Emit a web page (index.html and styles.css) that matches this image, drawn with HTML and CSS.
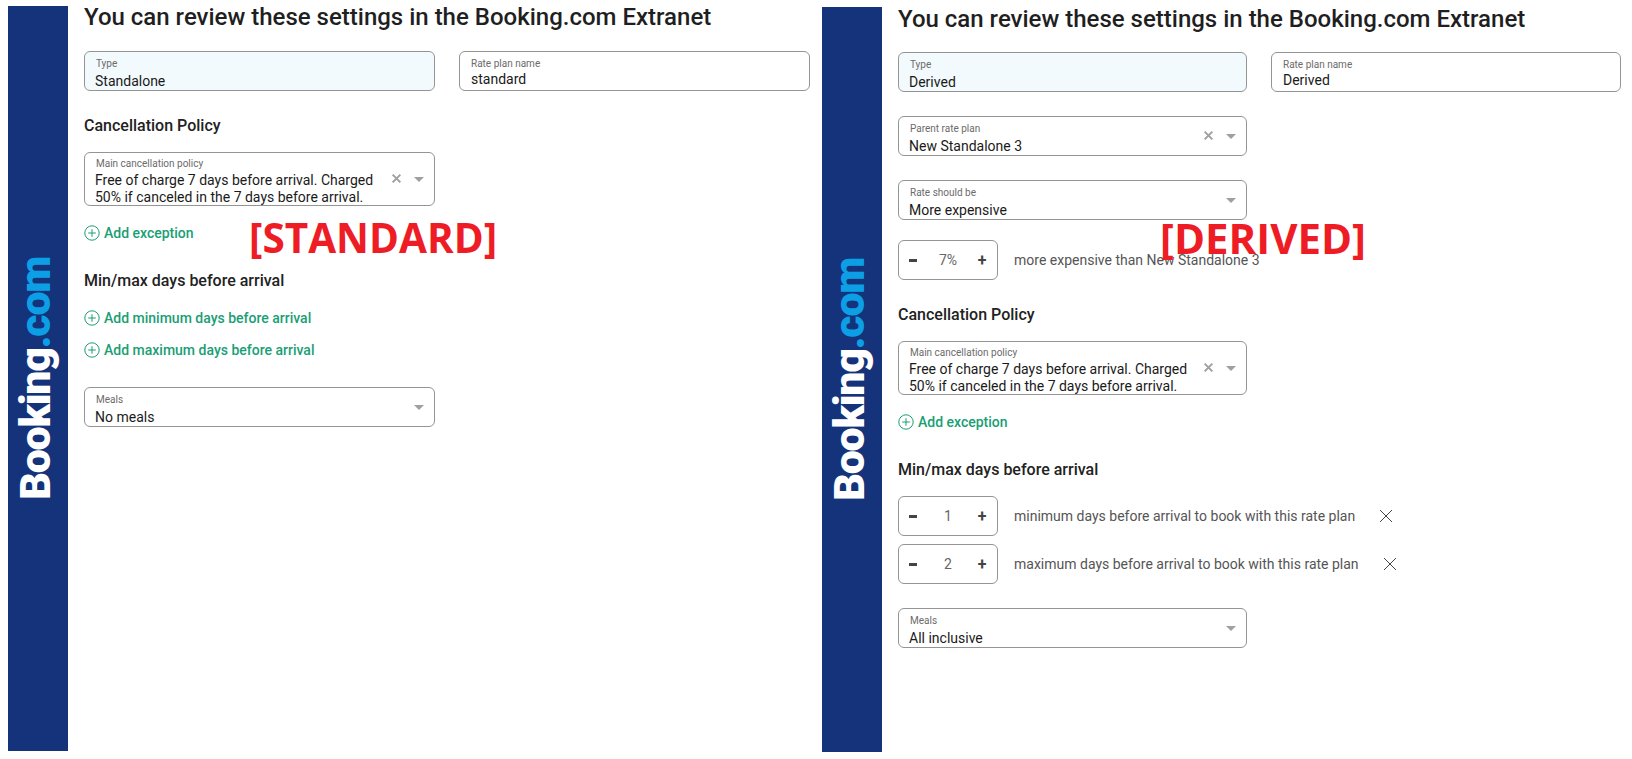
FILE: index.html
```html
<!DOCTYPE html>
<html lang="en">
<head>
    <meta charset="UTF-8">
    <meta name="viewport" content="width=device-width, initial-scale=1.0">
    <title>Rate plans - Standard and Derived</title>
    <link rel="stylesheet" href="styles.css">
</head>
<body>
    <div id="comparison">
        <!-- Standard rate plan -->
        <div class="panel panel-standard">
            <div class="brand-bar"><span class="brand">Booking<span class="brand-dot">.com</span></span></div>
            <div class="settings">
                <h1>You can review these settings in the Booking.com Extranet</h1>
                <div class="field-row">
                    <div class="field field-locked">
                        <label>Type</label>
                        <div class="value">Standalone</div>
                    </div>
                    <div class="field field-text">
                        <label>Rate plan name</label>
                        <div class="value">standard</div>
                    </div>
                </div>
                <h2 class="after-row">Cancellation Policy</h2>
                <div class="field field-half field-policy">
                    <label>Main cancellation policy</label>
                    <div class="value">Free of charge 7 days before arrival. Charged 50% if canceled in the 7 days before arrival.</div>
                    <svg class="clear" viewBox="0 0 10 10"><path d="M1.5 1.5l7 7M8.5 1.5l-7 7"/></svg>
                    <span class="caret"></span>
                </div>
                <div class="add-link add-exception">
                    <svg viewBox="0 0 16 16"><circle cx="8" cy="8" r="7.2"/><path d="M8 4.2v7.6M4.2 8h7.6"/></svg>
                    Add exception
                </div>
                <h2 class="after-add">Min/max days before arrival</h2>
                <div class="add-link add-first">
                    <svg viewBox="0 0 16 16"><circle cx="8" cy="8" r="7.2"/><path d="M8 4.2v7.6M4.2 8h7.6"/></svg>
                    Add minimum days before arrival
                </div>
                <div class="add-link add-second">
                    <svg viewBox="0 0 16 16"><circle cx="8" cy="8" r="7.2"/><path d="M8 4.2v7.6M4.2 8h7.6"/></svg>
                    Add maximum days before arrival
                </div>
                <div class="field field-half meals-standard">
                    <label>Meals</label>
                    <div class="value">No meals</div>
                    <span class="caret"></span>
                </div>
            </div>
            <div class="stamp stamp-standard">[STANDARD]</div>
        </div>

        <!-- Derived rate plan -->
        <div class="panel panel-derived">
            <div class="brand-bar"><span class="brand">Booking<span class="brand-dot">.com</span></span></div>
            <div class="settings">
                <h1>You can review these settings in the Booking.com Extranet</h1>
                <div class="field-row">
                    <div class="field field-locked">
                        <label>Type</label>
                        <div class="value">Derived</div>
                    </div>
                    <div class="field field-text">
                        <label>Rate plan name</label>
                        <div class="value">Derived</div>
                    </div>
                </div>
                <div class="field field-half parent-plan">
                    <label>Parent rate plan</label>
                    <div class="value">New Standalone 3</div>
                    <svg class="clear" viewBox="0 0 10 10"><path d="M1.5 1.5l7 7M8.5 1.5l-7 7"/></svg>
                    <span class="caret"></span>
                </div>
                <div class="field field-half rate-direction">
                    <label>Rate should be</label>
                    <div class="value">More expensive</div>
                    <span class="caret"></span>
                </div>
                <div class="stepper-row percent-row">
                    <div class="stepper">
                        <span class="minus"></span>
                        <span class="count count-muted">7%</span>
                        <span class="plus">+</span>
                    </div>
                    <span class="stepper-text">more expensive than New Standalone 3</span>
                </div>
                <h2 class="after-percent">Cancellation Policy</h2>
                <div class="field field-half field-policy">
                    <label>Main cancellation policy</label>
                    <div class="value">Free of charge 7 days before arrival. Charged 50% if canceled in the 7 days before arrival.</div>
                    <svg class="clear" viewBox="0 0 10 10"><path d="M1.5 1.5l7 7M8.5 1.5l-7 7"/></svg>
                    <span class="caret"></span>
                </div>
                <div class="add-link add-exception">
                    <svg viewBox="0 0 16 16"><circle cx="8" cy="8" r="7.2"/><path d="M8 4.2v7.6M4.2 8h7.6"/></svg>
                    Add exception
                </div>
                <h2 class="after-add">Min/max days before arrival</h2>
                <div class="stepper-row min-row">
                    <div class="stepper">
                        <span class="minus"></span>
                        <span class="count">1</span>
                        <span class="plus">+</span>
                    </div>
                    <span class="stepper-text">minimum days before arrival to book with this rate plan</span>
                    <svg class="remove" viewBox="0 0 14 14"><path d="M1 1l12 12M13 1L1 13"/></svg>
                </div>
                <div class="stepper-row max-row">
                    <div class="stepper">
                        <span class="minus"></span>
                        <span class="count">2</span>
                        <span class="plus">+</span>
                    </div>
                    <span class="stepper-text">maximum days before arrival to book with this rate plan</span>
                    <svg class="remove" viewBox="0 0 14 14"><path d="M1 1l12 12M13 1L1 13"/></svg>
                </div>
                <div class="field field-half meals-derived">
                    <label>Meals</label>
                    <div class="value">All inclusive</div>
                    <span class="caret"></span>
                </div>
            </div>
            <div class="stamp stamp-derived">[DERIVED]</div>
        </div>
    </div>
</body>
</html>
```

FILE: styles.css
```css
/* Base styles */
* {
    box-sizing: border-box;
    margin: 0;
    padding: 0;
}

html, body {
    height: 100%;
    overflow: hidden;
}

body {
    font-family: "Roboto", "Liberation Sans", sans-serif;
    background-color: #ffffff;
    color: #1a1a1a;
}

#comparison {
    display: flex;
    gap: 12px;
    padding: 6px 11px 0 8px;
}

.panel {
    position: relative;
    display: flex;
    height: 745px;
}

.panel-standard {
    width: 802px;
}

.panel-derived {
    flex: 1;
    margin-top: 1px;
}

/* Sidebar with the logo */
.brand-bar {
    flex: 0 0 60px;
    display: flex;
    align-items: center;
    justify-content: center;
    padding-right: 5px;
    background-color: #14337a;
}

.brand {
    writing-mode: vertical-rl;
    transform: rotate(180deg);
    font-family: "Roboto", sans-serif;
    font-size: 43px;
    font-weight: 900;
    line-height: 1;
    letter-spacing: -1.3px;
    color: #ffffff;
}

.brand-dot {
    color: #0d9fe6;
}

/* Settings column */
.settings {
    flex: 1;
    padding-left: 16px;
}

h1 {
    font-size: 24px;
    font-weight: 500;
    line-height: 24px;
    color: #1f1f1f;
}

.panel-standard h1 {
    margin-top: -1px;
}

h2 {
    font-size: 16px;
    font-weight: 500;
    line-height: 20px;
    color: #222;
}

.field-row {
    display: grid;
    grid-template-columns: 1fr 1fr;
    gap: 24px;
    margin-top: 21px;
}

.panel-standard .field-row {
    margin-top: 22px;
}

.panel-derived .field-row {
    grid-template-columns: 349px 1fr;
}

.field {
    position: relative;
    height: 40px;
    padding: 5px 50px 0 10px;
    border: 1px solid #949494;
    border-radius: 6px;
    background-color: #ffffff;
}

.field label {
    display: block;
    padding-left: 1px;
    font-size: 10px;
    line-height: 14px;
    color: #6b6b6b;
}

.field .value {
    margin-top: 2px;
    font-size: 14px;
    line-height: 17px;
    color: #1a1a1a;
}

.field-locked {
    background-color: #f2fafd;
}

.field-text .value {
    margin-top: 0;
    padding-left: 1px;
}

.field-half {
    width: 351px;
}

.panel-derived .field-half {
    width: 349px;
}

.field-policy {
    height: 54px;
    padding-top: 4px;
}

.field-policy label {
    line-height: 13px;
}

.clear {
    position: absolute;
    right: 32px;
    top: 50%;
    width: 11px;
    height: 11px;
    margin-top: -6px;
    fill: none;
    stroke: #a0a0a0;
    stroke-width: 1.8;
}

.caret {
    position: absolute;
    right: 10px;
    top: 50%;
    margin-top: -2px;
    border-left: 5px solid transparent;
    border-right: 5px solid transparent;
    border-top: 5px solid #a0a0a0;
}

/* Green links */
.add-link {
    display: flex;
    align-items: center;
    gap: 4px;
    height: 20px;
    font-size: 14px;
    font-weight: 500;
    color: #1a9e75;
}

.add-link svg {
    width: 16px;
    height: 16px;
    fill: none;
    stroke: #1a9e75;
    stroke-width: 1;
}

/* Stepper */
.stepper-row {
    display: flex;
    align-items: center;
}

.stepper {
    flex: 0 0 100px;
    display: flex;
    align-items: center;
    justify-content: space-between;
    height: 40px;
    padding: 0 10px;
    border: 1px solid #949494;
    border-radius: 6px;
}

.minus {
    width: 8px;
    height: 3px;
    background-color: #444;
}

.plus {
    width: 10px;
    padding-top: 1px;
    font-size: 16px;
    font-weight: 700;
    line-height: 16px;
    text-align: center;
    color: #444;
}

.count {
    padding-left: 2px;
    font-size: 14px;
    color: #666;
}

.stepper-text {
    margin-left: 16px;
    font-size: 14px;
    color: #555;
}

.remove {
    width: 14px;
    height: 14px;
    margin-left: 24px;
    fill: none;
    stroke: #444;
    stroke-width: 1;
}

/* Vertical rhythm */
.after-row { margin-top: 25px; }
.panel-standard .field-policy { margin-top: 16px; }
.panel-standard .add-exception { margin-top: 17px; }
.after-add { margin-top: 28px; }
.add-first { margin-top: 17px; }
.add-second { margin-top: 12px; }
.meals-standard { margin-top: 27px; }

.parent-plan { margin-top: 24px; }
.rate-direction { margin-top: 24px; }
.percent-row { margin-top: 20px; }
.after-percent { margin-top: 25px; }
.panel-derived .field-policy { margin-top: 16px; }
.panel-derived .add-exception { margin-top: 17px; }
.min-row { margin-top: 16px; }
.max-row { margin-top: 8px; }
.meals-derived { margin-top: 24px; }

/* Red captions laid over the screenshots */
.stamp {
    position: absolute;
    font-family: "Open Sans", sans-serif;
    font-weight: 700;
    line-height: 48px;
    color: #ee1c25;
}

.stamp-standard {
    left: 241px;
    top: 208px;
    font-size: 40.5px;
}

.stamp-derived {
    left: 338px;
    top: 207px;
    font-size: 42px;
}
```
